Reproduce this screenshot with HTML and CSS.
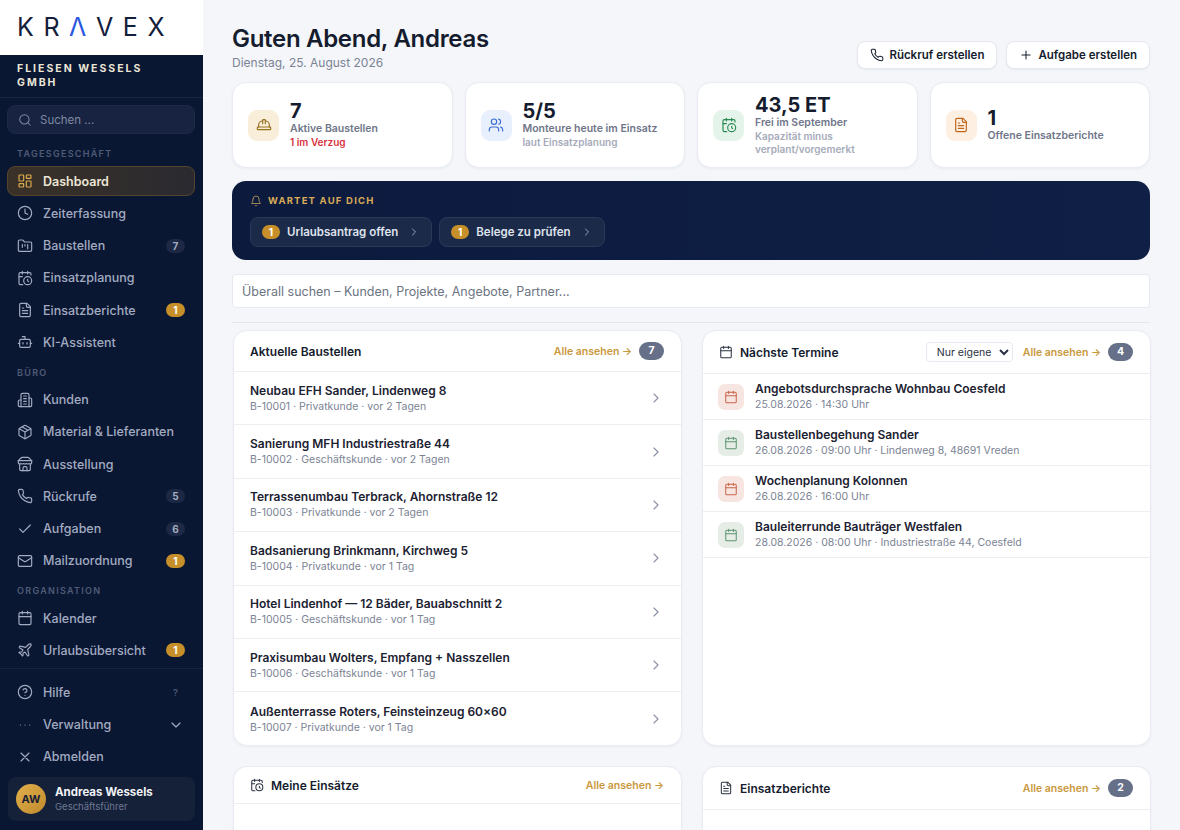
FILE: index.html
```html
<!DOCTYPE html>
<html lang="de">
<head>
<meta charset="utf-8">
<title>Kravex Dashboard</title>
<link rel="stylesheet" href="styles.css">
</head>
<body>
<svg class="sprite" aria-hidden="true">
  <symbol id="i-dash" viewBox="0 0 24 24"><rect x="3" y="3" width="7" height="9" rx="1"/><rect x="14" y="3" width="7" height="5" rx="1"/><rect x="14" y="12" width="7" height="9" rx="1"/><rect x="3" y="16" width="7" height="5" rx="1"/></symbol>
  <symbol id="i-clock" viewBox="0 0 24 24"><circle cx="12" cy="12" r="10"/><path d="M12 6v6l4 2"/></symbol>
  <symbol id="i-folder" viewBox="0 0 24 24"><path d="M20 20a2 2 0 0 0 2-2V8a2 2 0 0 0-2-2h-7.9a2 2 0 0 1-1.69-.9L9.6 3.9A2 2 0 0 0 7.93 3H4a2 2 0 0 0-2 2v13a2 2 0 0 0 2 2Z"/><path d="M8 10v4M12 10v2M16 10v6"/></symbol>
  <symbol id="i-calclock" viewBox="0 0 24 24"><path d="M21 7.5V6a2 2 0 0 0-2-2H5a2 2 0 0 0-2 2v14a2 2 0 0 0 2 2h3.5"/><path d="M16 2v4M8 2v4M3 10h5M17.5 17.5 16 16.3V14"/><circle cx="16" cy="16" r="6"/></symbol>
  <symbol id="i-file" viewBox="0 0 24 24"><path d="M15 2H6a2 2 0 0 0-2 2v16a2 2 0 0 0 2 2h12a2 2 0 0 0 2-2V7Z"/><path d="M14 2v4a2 2 0 0 0 2 2h4M10 9H8M16 13H8M16 17H8"/></symbol>
  <symbol id="i-bot" viewBox="0 0 24 24"><path d="M12 8V4H8"/><rect x="4" y="8" width="16" height="12" rx="2"/><path d="M2 14h2M20 14h2M15 13v2M9 13v2"/></symbol>
  <symbol id="i-building" viewBox="0 0 24 24"><path d="M6 22V4a2 2 0 0 1 2-2h8a2 2 0 0 1 2 2v18Z"/><path d="M6 12H4a2 2 0 0 0-2 2v6a2 2 0 0 0 2 2h2M18 9h2a2 2 0 0 1 2 2v9a2 2 0 0 1-2 2h-2M10 6h4M10 10h4M10 14h4M10 18h4"/></symbol>
  <symbol id="i-package" viewBox="0 0 24 24"><path d="M11 21.73a2 2 0 0 0 2 0l7-4A2 2 0 0 0 21 16V8a2 2 0 0 0-1-1.73l-7-4a2 2 0 0 0-2 0l-7 4A2 2 0 0 0 3 8v8a2 2 0 0 0 1 1.73z"/><path d="M12 22V12M3.3 7l8.7 5 8.7-5M7.5 4.27l9 5.15"/></symbol>
  <symbol id="i-store" viewBox="0 0 24 24"><path d="m2 7 4.41-4.41A2 2 0 0 1 7.83 2h8.34a2 2 0 0 1 1.42.59L22 7"/><path d="M4 12v8a2 2 0 0 0 2 2h12a2 2 0 0 0 2-2v-8"/><path d="M15 22v-4a2 2 0 0 0-2-2h-2a2 2 0 0 0-2 2v4M2 7h20"/><path d="M22 7v3a2 2 0 0 1-2 2 2.7 2.7 0 0 1-1.59-.63.7.7 0 0 0-.82 0A2.7 2.7 0 0 1 16 12a2.7 2.7 0 0 1-1.59-.63.7.7 0 0 0-.82 0A2.7 2.7 0 0 1 12 12a2.7 2.7 0 0 1-1.59-.63.7.7 0 0 0-.82 0A2.7 2.7 0 0 1 8 12a2.7 2.7 0 0 1-1.59-.63.7.7 0 0 0-.82 0A2.7 2.7 0 0 1 4 12a2 2 0 0 1-2-2V7"/></symbol>
  <symbol id="i-phone" viewBox="0 0 24 24"><path d="M22 16.92v3a2 2 0 0 1-2.18 2 19.79 19.79 0 0 1-8.63-3.07 19.5 19.5 0 0 1-6-6 19.79 19.79 0 0 1-3.07-8.67A2 2 0 0 1 4.11 2h3a2 2 0 0 1 2 1.72 12.84 12.84 0 0 0 .7 2.81 2 2 0 0 1-.45 2.11L8.09 9.91a16 16 0 0 0 6 6l1.27-1.27a2 2 0 0 1 2.11-.45 12.84 12.84 0 0 0 2.81.7A2 2 0 0 1 22 16.92z"/></symbol>
  <symbol id="i-check" viewBox="0 0 24 24"><path d="M20 6 9 17l-5-5"/></symbol>
  <symbol id="i-mail" viewBox="0 0 24 24"><rect x="2" y="4" width="20" height="16" rx="2"/><path d="m22 7-8.97 5.7a1.94 1.94 0 0 1-2.06 0L2 7"/></symbol>
  <symbol id="i-cal" viewBox="0 0 24 24"><path d="M8 2v4M16 2v4"/><rect x="3" y="4" width="18" height="18" rx="2"/><path d="M3 10h18"/></symbol>
  <symbol id="i-plane" viewBox="0 0 24 24"><path d="M17.8 19.2 16 11l3.5-3.5C21 6 21.5 4 21 3c-1-.5-3 0-4.5 1.5L13 8 4.8 6.2c-.5-.1-.9.1-1.1.5l-.3.5c-.2.5-.1 1 .3 1.3L9 12l-2 3H4l-1 1 3 2 2 3 1-1v-3l3-2 3.5 5.3c.3.4.8.5 1.3.3l.5-.2c.4-.3.6-.7.5-1.2z"/></symbol>
  <symbol id="i-help" viewBox="0 0 24 24"><circle cx="12" cy="12" r="10"/><path d="M9.09 9a3 3 0 0 1 5.83 1c0 2-3 3-3 3M12 17h.01"/></symbol>
  <symbol id="i-more" viewBox="0 0 24 24"><path d="M5 12h.01M12 12h.01M19 12h.01"/></symbol>
  <symbol id="i-x" viewBox="0 0 24 24"><path d="M18 6 6 18M6 6l12 12"/></symbol>
  <symbol id="i-down" viewBox="0 0 24 24"><path d="m6 9 6 6 6-6"/></symbol>
  <symbol id="i-right" viewBox="0 0 24 24"><path d="m9 18 6-6-6-6"/></symbol>
  <symbol id="i-search" viewBox="0 0 24 24"><circle cx="11" cy="11" r="8"/><path d="m21 21-4.3-4.3"/></symbol>
  <symbol id="i-hat" viewBox="0 0 24 24"><path d="M10 10V5a1 1 0 0 1 1-1h2a1 1 0 0 1 1 1v5"/><path d="M14 6a6 6 0 0 1 6 6v3M4 15v-3a6 6 0 0 1 6-6"/><rect x="2" y="15" width="20" height="4" rx="1"/></symbol>
  <symbol id="i-users" viewBox="0 0 24 24"><path d="M16 21v-2a4 4 0 0 0-4-4H6a4 4 0 0 0-4 4v2"/><circle cx="9" cy="7" r="4"/><path d="M22 21v-2a4 4 0 0 0-3-3.87M16 3.13a4 4 0 0 1 0 7.75"/></symbol>
  <symbol id="i-plus" viewBox="0 0 24 24"><path d="M5 12h14M12 5v14"/></symbol>
  <symbol id="i-bell" viewBox="0 0 24 24"><path d="M6 8a6 6 0 0 1 12 0c0 7 3 9 3 9H3s3-2 3-9"/><path d="M10.3 21a1.94 1.94 0 0 0 3.4 0"/></symbol>
</svg>

<div class="app">
  <aside class="sidebar">
    <div class="logo">KR<span class="logo-a">Λ</span>VEX</div>
    <div class="company">FLIESEN WESSELS GMBH</div>
    <div class="side-search"><svg class="ic ic-14"><use href="#i-search"/></svg><span>Suchen ...</span></div>
    <nav class="nav">
      <div class="group first">TAGESGESCHÄFT</div>
      <a class="item active"><svg class="ic"><use href="#i-dash"/></svg><span class="lbl">Dashboard</span></a>
      <a class="item"><svg class="ic"><use href="#i-clock"/></svg><span class="lbl">Zeiterfassung</span></a>
      <a class="item"><svg class="ic"><use href="#i-folder"/></svg><span class="lbl">Baustellen</span><b class="pill">7</b></a>
      <a class="item"><svg class="ic"><use href="#i-calclock"/></svg><span class="lbl">Einsatzplanung</span></a>
      <a class="item"><svg class="ic"><use href="#i-file"/></svg><span class="lbl">Einsatzberichte</span><b class="pill gold">1</b></a>
      <a class="item"><svg class="ic"><use href="#i-bot"/></svg><span class="lbl">KI-Assistent</span></a>
      <div class="group">BÜRO</div>
      <a class="item"><svg class="ic"><use href="#i-building"/></svg><span class="lbl">Kunden</span></a>
      <a class="item"><svg class="ic"><use href="#i-package"/></svg><span class="lbl">Material &amp; Lieferanten</span></a>
      <a class="item"><svg class="ic"><use href="#i-store"/></svg><span class="lbl">Ausstellung</span></a>
      <a class="item"><svg class="ic"><use href="#i-phone"/></svg><span class="lbl">Rückrufe</span><b class="pill">5</b></a>
      <a class="item"><svg class="ic"><use href="#i-check"/></svg><span class="lbl">Aufgaben</span><b class="pill">6</b></a>
      <a class="item"><svg class="ic"><use href="#i-mail"/></svg><span class="lbl">Mailzuordnung</span><b class="pill gold">1</b></a>
      <div class="group">ORGANISATION</div>
      <a class="item"><svg class="ic"><use href="#i-cal"/></svg><span class="lbl">Kalender</span></a>
      <a class="item"><svg class="ic"><use href="#i-plane"/></svg><span class="lbl">Urlaubsübersicht</span><b class="pill gold">1</b></a>
    </nav>
    <div class="side-foot">
      <a class="item"><svg class="ic"><use href="#i-help"/></svg><span class="lbl">Hilfe</span><span class="hint">?</span></a>
      <a class="item"><svg class="ic"><use href="#i-more"/></svg><span class="lbl">Verwaltung</span><svg class="ic chev"><use href="#i-down"/></svg></a>
      <a class="item"><svg class="ic"><use href="#i-x"/></svg><span class="lbl">Abmelden</span></a>
      <div class="user">
        <div class="avatar">AW</div>
        <div><div class="uname">Andreas Wessels</div><div class="urole">Geschäftsführer</div></div>
      </div>
    </div>
  </aside>

  <main class="main">
    <header class="head">
      <div>
        <h1>Guten Abend, Andreas</h1>
        <p class="date">Dienstag, 25. August 2026</p>
      </div>
      <div class="actions">
        <button class="btn"><svg class="ic ic-14"><use href="#i-phone"/></svg>Rückruf erstellen</button>
        <button class="btn"><svg class="ic ic-14"><use href="#i-plus"/></svg>Aufgabe erstellen</button>
      </div>
    </header>

    <section class="kpis">
      <div class="kpi"><div class="kpi-ic amber"><svg class="ic"><use href="#i-hat"/></svg></div><div><div class="num">7</div><div class="kl">Aktive Baustellen</div><div class="ks red">1 im Verzug</div></div></div>
      <div class="kpi"><div class="kpi-ic blue"><svg class="ic"><use href="#i-users"/></svg></div><div><div class="num">5/5</div><div class="kl">Monteure heute im Einsatz</div><div class="ks">laut Einsatzplanung</div></div></div>
      <div class="kpi"><div class="kpi-ic green"><svg class="ic"><use href="#i-calclock"/></svg></div><div><div class="num">43,5 ET</div><div class="kl">Frei im September</div><div class="ks">Kapazität minus<br>verplant/vorgemerkt</div></div></div>
      <div class="kpi"><div class="kpi-ic orange"><svg class="ic"><use href="#i-file"/></svg></div><div><div class="num">1</div><div class="kl">Offene Einsatzberichte</div></div></div>
    </section>

    <section class="banner">
      <div class="banner-t"><svg class="ic ic-12"><use href="#i-bell"/></svg>WARTET AUF DICH</div>
      <div class="chips">
        <a class="chip"><b class="pill gold">1</b>Urlaubsantrag offen<svg class="ic ic-12"><use href="#i-right"/></svg></a>
        <a class="chip"><b class="pill gold">1</b>Belege zu prüfen<svg class="ic ic-12"><use href="#i-right"/></svg></a>
      </div>
    </section>

    <input class="global" type="text" placeholder="Überall suchen – Kunden, Projekte, Angebote, Partner...">
    <hr class="rule">

    <section class="grid">
      <article class="panel">
        <div class="p-head"><h2>Aktuelle Baustellen</h2><a class="all">Alle ansehen →</a><b class="count">7</b></div>
        <a class="row"><div class="row-b"><div class="rt">Neubau EFH Sander, Lindenweg 8</div><div class="rs">B-10001 · Privatkunde · vor 2 Tagen</div></div><svg class="ic"><use href="#i-right"/></svg></a>
        <a class="row"><div class="row-b"><div class="rt">Sanierung MFH Industriestraße 44</div><div class="rs">B-10002 · Geschäftskunde · vor 2 Tagen</div></div><svg class="ic"><use href="#i-right"/></svg></a>
        <a class="row"><div class="row-b"><div class="rt">Terrassenumbau Terbrack, Ahornstraße 12</div><div class="rs">B-10003 · Privatkunde · vor 2 Tagen</div></div><svg class="ic"><use href="#i-right"/></svg></a>
        <a class="row"><div class="row-b"><div class="rt">Badsanierung Brinkmann, Kirchweg 5</div><div class="rs">B-10004 · Privatkunde · vor 1 Tag</div></div><svg class="ic"><use href="#i-right"/></svg></a>
        <a class="row"><div class="row-b"><div class="rt">Hotel Lindenhof — 12 Bäder, Bauabschnitt 2</div><div class="rs">B-10005 · Geschäftskunde · vor 1 Tag</div></div><svg class="ic"><use href="#i-right"/></svg></a>
        <a class="row"><div class="row-b"><div class="rt">Praxisumbau Wolters, Empfang + Nasszellen</div><div class="rs">B-10006 · Geschäftskunde · vor 1 Tag</div></div><svg class="ic"><use href="#i-right"/></svg></a>
        <a class="row last"><div class="row-b"><div class="rt">Außenterrasse Roters, Feinsteinzeug 60×60</div><div class="rs">B-10007 · Privatkunde · vor 1 Tag</div></div><svg class="ic"><use href="#i-right"/></svg></a>
      </article>

      <article class="panel">
        <div class="p-head tall"><svg class="ic ic-14 dark"><use href="#i-cal"/></svg><h2>Nächste Termine</h2><select class="sel"><option>Nur eigene</option></select><a class="all">Alle ansehen →</a><b class="count">4</b></div>
        <a class="ev"><div class="ev-ic rose"><svg class="ic ic-14"><use href="#i-cal"/></svg></div><div><div class="rt">Angebotsdurchsprache Wohnbau Coesfeld</div><div class="rs">25.08.2026 · 14:30 Uhr</div></div></a>
        <a class="ev"><div class="ev-ic sage"><svg class="ic ic-14"><use href="#i-cal"/></svg></div><div><div class="rt">Baustellenbegehung Sander</div><div class="rs">26.08.2026 · 09:00 Uhr · Lindenweg 8, 48691 Vreden</div></div></a>
        <a class="ev"><div class="ev-ic rose"><svg class="ic ic-14"><use href="#i-cal"/></svg></div><div><div class="rt">Wochenplanung Kolonnen</div><div class="rs">26.08.2026 · 16:00 Uhr</div></div></a>
        <a class="ev"><div class="ev-ic sage"><svg class="ic ic-14"><use href="#i-cal"/></svg></div><div><div class="rt">Bauleiterrunde Bauträger Westfalen</div><div class="rs">28.08.2026 · 08:00 Uhr · Industriestraße 44, Coesfeld</div></div></a>
      </article>

      <article class="panel">
        <div class="p-head short"><svg class="ic ic-14 dark"><use href="#i-calclock"/></svg><h2>Meine Einsätze</h2><a class="all">Alle ansehen →</a></div>
      </article>

      <article class="panel">
        <div class="p-head tall"><svg class="ic ic-14 dark"><use href="#i-file"/></svg><h2>Einsatzberichte</h2><a class="all">Alle ansehen →</a><b class="count">2</b></div>
        <a class="row"><div class="row-b"><div class="rt">Familie Sander · Neubau EFH Sander, Lindenweg 8</div></div></a>
      </article>
    </section>
  </main>
</div>
</body>
</html>
```

FILE: styles.css
```css
* { box-sizing: border-box; }
html, body { margin: 0; height: 830px; overflow: hidden; }
body { font-family: Inter, "Liberation Sans", sans-serif; background: #f4f6fa; color: #151c2e; }
.sprite { display: none; }
a { color: inherit; text-decoration: none; }

.ic { width: 16px; height: 16px; flex: none; fill: none; stroke: currentColor; stroke-width: 1.75; stroke-linecap: round; stroke-linejoin: round; }
.ic-14 { width: 14px; height: 14px; }
.ic-12 { width: 12px; height: 12px; }

.app { display: flex; height: 830px; }

/* Sidebar */
.sidebar { width: 203px; flex: none; height: 830px; background: #0a1733; color: #a2abc0; display: flex; flex-direction: column; overflow: hidden; }
.logo { height: 55px; background: #fff; color: #14203a; font-size: 25px; font-weight: 400; letter-spacing: 9.6px; line-height: 55px; padding-left: 17px; white-space: nowrap; }
.logo-a { color: #2a56e0; }
.company { height: 43px; padding: 7px 40px 0 17px; font-size: 10.5px; font-weight: 700; letter-spacing: 2px; line-height: 14px; color: #ebe6d6; border-bottom: 1px solid #18243f; }
.side-search { margin: 7px 8px 0 7px; height: 29px; border-radius: 8px; background: #172340; border: 1px solid #1c2947; display: flex; align-items: center; gap: 8px; padding: 0 10px; font-size: 11.5px; color: #7f8aa3; }
.nav { flex: 1; padding: 0 8px 0 7px; min-height: 0; }
.group { font-size: 9px; font-weight: 600; letter-spacing: 1.3px; color: #4f5b76; height: 12px; line-height: 12px; margin: 9px 0 6px 10px; }
.group.first { margin-top: 14px; }
.item { display: flex; align-items: center; height: 30.25px; margin-bottom: 2px; padding: 0 9px; gap: 10px; border-radius: 8px; font-size: 12.5px; font-weight: 500; color: #a2abc0; border: 1px solid transparent; }
.item .lbl { flex: 1; white-space: nowrap; }
.item.active { background: linear-gradient(90deg, #3a3128, #2a2a30); border-color: #54442c; color: #ece6d6; font-weight: 600; }
.item.active .ic { color: #dcaa4c; }
.pill { min-width: 19px; height: 14px; padding: 0 5px; border-radius: 7px; background: #1c2844; color: #a2abc0; font-size: 10px; font-weight: 700; line-height: 14px; text-align: center; }
.pill.gold { background: #c68f2a; color: #fff; }
.hint { font-size: 9.5px; color: #4f5b76; width: 19px; text-align: center; }
.chev { margin-right: 1px; }
.side-foot { border-top: 1px solid #18243f; padding: 8px 8px 9px 7px; }
.user { margin: 5px 0 0 1px; height: 44px; border-radius: 8px; background: #152039; display: flex; align-items: center; gap: 9px; padding: 0 8px; }
.avatar { width: 30px; height: 30px; border-radius: 50%; background: linear-gradient(135deg, #e3b04d, #bf8a2c); color: #182036; font-size: 11px; font-weight: 700; display: flex; align-items: center; justify-content: center; }
.uname { font-size: 11.5px; font-weight: 700; color: #f2f3f6; line-height: 15px; }
.urole { font-size: 9.5px; color: #6f7a93; line-height: 14px; }

/* Main */
.main { flex: 1; min-width: 0; padding: 24px 30px 0 29px; overflow: hidden; }
.head { display: flex; justify-content: space-between; align-items: flex-start; height: 58px; }
h1 { margin: 0; font-size: 24px; font-weight: 600; letter-spacing: -0.3px; line-height: 29px; color: #151c2e; }
.date { margin: 2px 0 0; font-size: 12px; color: #7b8394; line-height: 15px; }
.actions { display: flex; gap: 9px; margin-top: 17px; }
.btn { height: 28px; padding: 0 12px; display: flex; align-items: center; gap: 5px; font: 600 11.5px Inter, sans-serif; color: #151c2e; background: #fff; border: 1px solid #e5e8ee; border-radius: 8px; box-shadow: 0 1px 2px rgba(20,30,60,.06); }

.kpis { display: grid; grid-template-columns: repeat(4, 1fr); gap: 12px; }
.kpi { height: 86px; background: #fff; border: 1px solid #e9ecf2; border-radius: 14px; box-shadow: 0 1px 3px rgba(20,30,60,.05); display: flex; align-items: center; gap: 11px; padding: 0 15px; }
.kpi-ic { width: 31px; height: 31px; border-radius: 9px; display: flex; align-items: center; justify-content: center; flex: none; }
.amber { background: #f8eeda; color: #96721f; }
.blue { background: #e8effd; color: #3c6dd0; }
.green { background: #e5f4ea; color: #2a8a52; }
.orange { background: #fdf0e2; color: #c2661a; }
.num { font-size: 20px; font-weight: 700; line-height: 22px; color: #151c2e; }
.kl { font-size: 10.5px; font-weight: 600; color: #6f7689; line-height: 14px; }
.ks { font-size: 10px; font-weight: 600; color: #a6abba; line-height: 13.5px; }
.ks.red { color: #d8333b; }

.banner { margin-top: 13px; height: 79px; border-radius: 14px; background: linear-gradient(90deg, #0b1a3d, #101f45); padding: 13px 18px; }
.banner-t { display: flex; align-items: center; gap: 6px; font-size: 9.5px; font-weight: 700; letter-spacing: 1.2px; color: #d9ac58; line-height: 13px; }
.banner-t .ic { color: #b59358; }
.chips { display: flex; gap: 7px; margin-top: 10px; }
.chip { height: 30px; display: flex; align-items: center; gap: 7px; padding: 0 11px; font-size: 11.5px; font-weight: 600; color: #dfe3ec; background: #1c2a4a; border: 1px solid #2b3858; border-radius: 8px; }
.chip .ic { margin-left: 3px; color: #aab2c4; }
.chip .pill { min-width: 18px; height: 14px; padding: 0 4px; }

.global { display: block; width: 100%; height: 34px; margin-top: 14px; padding: 0 9px; font: 400 12.5px Inter, sans-serif; color: #151c2e; background: #fff; border: 1px solid #e6e9ef; border-radius: 4px; outline: none; }
.global::placeholder { color: #6d7482; opacity: 1; }
.rule { border: 0; border-top: 1px solid #e3e6ec; margin: 14px 0 7px; }

.grid { display: grid; grid-template-columns: 449px 449px; column-gap: 20px; row-gap: 20px; grid-template-rows: 416px 200px; margin-left: 1px; width: 918px; }
.panel { background: #fff; border: 1px solid #e9ecf2; border-radius: 14px; box-shadow: 0 1px 3px rgba(20,30,60,.05); overflow: hidden; }
.p-head { height: 41px; display: flex; align-items: center; padding: 0 17px 0 16px; gap: 7px; border-bottom: 1px solid #eceef3; }
.p-head.tall { height: 43px; }
.p-head.short { height: 37px; }
h2 { margin: 0; flex: 1; font-size: 12px; font-weight: 600; color: #151c2e; }
.dark { color: #2a3142; }
.all { font-size: 10.5px; font-weight: 600; color: #c9983d; white-space: nowrap; }
.count { min-width: 25px; height: 18px; padding: 0 7px; border-radius: 9px; background: #667089; color: #fff; font-size: 10.5px; font-weight: 700; line-height: 18px; text-align: center; }
.sel { height: 20px; width: 87px; margin-right: 3px; font: 400 10.5px Inter, sans-serif; color: #2a3142; background: #fff; border: 1px solid #e6e9ef; border-radius: 4px; padding: 0 4px 0 6px; }
.row { height: 53.4px; display: flex; align-items: center; padding: 0 17px 0 16px; border-bottom: 1px solid #eceef3; }
.row.last { border-bottom: 0; }
.row-b { flex: 1; }
.row .ic { color: #8e94a3; }
.rt { font-size: 12px; font-weight: 600; color: #1c2232; line-height: 16px; white-space: nowrap; }
.rs { font-size: 10.5px; color: #7b8394; line-height: 15px; white-space: nowrap; }
.ev { height: 46px; display: flex; align-items: center; gap: 11px; padding: 0 15px; border-bottom: 1px solid #eceef3; }
.ev-ic { width: 26px; height: 26px; border-radius: 7px; display: flex; align-items: center; justify-content: center; flex: none; }
.rose { background: #f6e5e0; color: #c9654a; }
.sage { background: #e6ede7; color: #5b9470; }
```
